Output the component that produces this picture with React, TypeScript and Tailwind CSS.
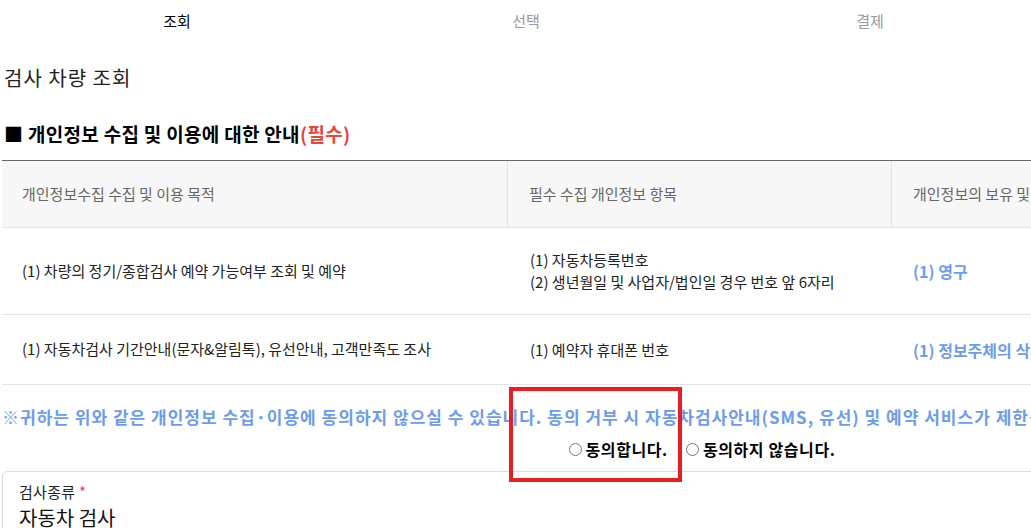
const font = { fontFamily: '"Noto Sans CJK KR", "Noto Sans", sans-serif' };

const tabs = [
  { label: '조회', active: true, w: 'w-[354px]' },
  { label: '선택', active: false, w: 'w-[344px]' },
  { label: '결제', active: false, w: 'w-[344px]' },
  { label: '완료', active: false, w: 'w-[358px]' },
];

const rows = [
  {
    h: 'h-[87px]',
    purpose: '(1) 차량의 정기/종합검사 예약 가능여부 조회 및 예약',
    items: ['(1) 자동차등록번호', '(2) 생년월일 및 사업자/법인일 경우 번호 앞 6자리'],
    keep: '(1) 영구',
  },
  {
    h: 'h-[70px]',
    purpose: '(1) 자동차검사 기간안내(문자&알림톡), 유선안내, 고객만족도 조사',
    items: ['(1) 예약자 휴대폰 번호'],
    keep: '(1) 정보주체의 삭제 요청 시까지',
  },
];

const Radio = ({ label }: { label: string }) => (
  <label className="flex items-center gap-[4px]">
    <span className="w-[13px] h-[13px] rounded-full border border-[#767676] bg-white" />
    <span className="text-[16px] leading-[24px] font-bold text-black tracking-[0.6px]">{label}</span>
  </label>
);

export default function App() {
  return (
    <div className="w-[1031px] h-[528px] overflow-hidden bg-white relative" style={font}>
      <div className="w-[1400px] px-[2px]">
        <div className="flex h-[42px] -mx-[2px]">
          {tabs.map(t => (
            <div
              key={t.label}
              className={`${t.w} flex items-center justify-center text-[15px] ${t.active ? 'text-black' : 'text-[#999999]'}`}
            >
              {t.label}
            </div>
          ))}
        </div>

        <h1 className="mt-[22px] text-[20px] leading-[28px] text-[#222222] pl-[2px] tracking-[1px]">검사 차량 조회</h1>

        <h2 className="mt-[28px] text-[19px] leading-[28px] font-bold text-black pl-[2px] tracking-[0.3px]">
          ■ 개인정보 수집 및 이용에 대한 안내<span className="text-[#e4483c]">(필수)</span>
        </h2>

        <div className="mt-[12px] border-t border-[#666666]">
          <div className="flex h-[67px] bg-[#f7f7f7] border-b border-[#e5e5e5] text-[15px] text-[#666666]">
            <div className="w-[506px] flex items-center pl-[20px] border-r border-[#e5e5e5]">개인정보수집 수집 및 이용 목적</div>
            <div className="w-[384px] flex items-center pl-[21px] border-r border-[#e5e5e5]">필수 수집 개인정보 항목</div>
            <div className="flex-1 flex items-center pl-[21px]">개인정보의 보유 및 이용 기간</div>
          </div>
          {rows.map((r, i) => (
            <div key={i} className={`flex ${r.h} border-b border-[#e5e5e5] text-[15px] text-[#222222]`}>
              <div className="w-[506px] flex items-center pl-[20px]">{r.purpose}</div>
              <div className="w-[384px] flex flex-col justify-center pl-[22px] leading-[22px]">
                {r.items.map(it => (
                  <span key={it}>{it}</span>
                ))}
              </div>
              <div className="flex-1 flex items-center pl-[21px] text-[16px] font-bold text-[#6d9cec]">{r.keep}</div>
            </div>
          ))}
        </div>

        <p className="mt-[20px] text-[17px] leading-[24px] font-bold text-[#6d9cec] tracking-[1px] whitespace-nowrap">
          ※귀하는 위와 같은 개인정보 수집·이용에 동의하지 않으실 수 있습니다. 동의 거부 시 자동차검사안내(SMS, 유선) 및 예약 서비스가 제한됩니다.
        </p>

        <div className="mt-[8px] flex justify-center gap-[18px] h-[24px] pl-[4px]">
          <Radio label="동의합니다." />
          <Radio label="동의하지 않습니다." />
        </div>

        <div className="mt-[10px] border border-[#dddddd] rounded-[5px] px-[16px] pt-[10px] pb-[12px]">
          <div className="text-[15px] leading-[20px] text-[#222222] tracking-[0.3px]">
            검사종류 <span className="text-[#e0446a]">*</span>
          </div>
          <div className="mt-[3px] text-[20px] leading-[26px] text-[#111111]">자동차 검사</div>
        </div>
      </div>

      <div className="absolute left-[509px] top-[387px] w-[173px] h-[95px] border-[4px] border-[#ec1c24] pointer-events-none" />
    </div>
  );
}
